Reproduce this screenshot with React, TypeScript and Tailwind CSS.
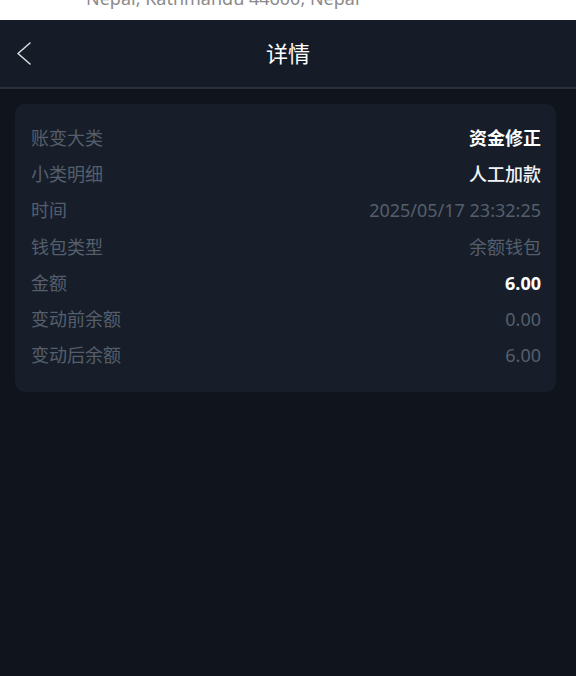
const rows = [
  { label: "账变大类", value: "资金修正", tone: "text-white font-bold" },
  { label: "小类明细", value: "人工加款", tone: "text-[#f1f3f6] font-medium" },
  { label: "时间", value: "2025/05/17 23:32:25", tone: "text-[#555e6c]" },
  { label: "钱包类型", value: "余额钱包", tone: "text-[#555e6c]" },
  { label: "金额", value: "6.00", tone: "text-white font-bold" },
  { label: "变动前余额", value: "0.00", tone: "text-[#555e6c]" },
  { label: "变动后余额", value: "6.00", tone: "text-[#555e6c]" },
];

export default function App() {
  return (
    <div
      className="w-[576px] h-[676px] flex flex-col bg-[#10151d] overflow-hidden"
      style={{ fontFamily: '"Noto Sans", "Noto Sans CJK SC", sans-serif' }}
    >
      {/* clipped status text */}
      <div className="h-[20px] bg-white overflow-hidden relative">
        <div className="absolute left-[86px] -top-[14px] text-[18px] text-[#8a8a8a] leading-[24px]">
          Nepal, Kathmandu 44600, Nepal
        </div>
      </div>

      {/* header */}
      <div className="h-[69px] bg-[#161c27] border-b-2 border-[#2a313c] flex items-center relative">
        <button className="absolute left-[15px] top-[21px] text-[#d7dbe0]">
          <svg width="18" height="25" viewBox="0 0 18 25" fill="none">
            <path d="M15 2 L3 12.5 L15 23" stroke="currentColor" strokeWidth="1.6" strokeLinecap="round" strokeLinejoin="round" />
          </svg>
        </button>
        <div className="flex-1 text-center text-[22px] text-white leading-none pb-[2px]">详情</div>
      </div>

      {/* detail card */}
      <div className="ml-[15px] mr-[20px] mt-[15px] rounded-[10px] bg-[#171e29] pl-4 pr-[15px] pt-4 pb-[18px]">
        {rows.map((r) => (
          <div key={r.label} className="h-[36.3px] flex items-center justify-between text-[18px]">
            <span className="text-[#555e6c]">{r.label}</span>
            <span className={r.tone}>{r.value}</span>
          </div>
        ))}
      </div>
    </div>
  );
}
